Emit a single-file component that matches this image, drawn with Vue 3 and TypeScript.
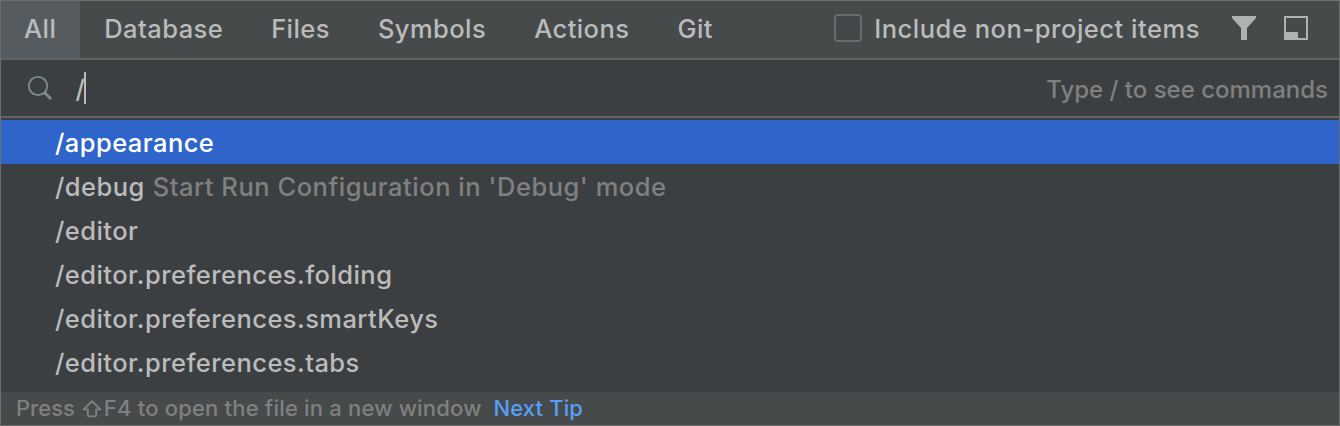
<script setup lang="ts">
import { ref } from 'vue'

interface Result {
  command: string
  description?: string
}

const tabs = ['All', 'Database', 'Files', 'Symbols', 'Actions', 'Git']
const activeTab = ref('All')
const selected = ref(0)
const includeNonProject = ref(false)

const results: Result[] = [
  { command: '/appearance' },
  { command: '/debug', description: "Start Run Configuration in 'Debug' mode" },
  { command: '/editor' },
  { command: '/editor.preferences.folding' },
  { command: '/editor.preferences.smartKeys' },
  { command: '/editor.preferences.tabs' },
]
</script>

<template>
  <div class="popup">
    <header class="toolbar">
      <nav class="tabs">
        <div
          v-for="tab in tabs"
          :key="tab"
          :class="['tab', 'tab-' + tab.toLowerCase(), { active: tab === activeTab }]"
          @click="activeTab = tab"
        >{{ tab }}</div>
      </nav>
      <div class="options">
        <div class="include" @click="includeNonProject = !includeNonProject">
          <span class="checkbox"></span>
          <span class="include-label">Include non-project items</span>
        </div>
        <svg class="icon filter" width="24" height="24" viewBox="0 0 24 24">
          <path d="M0 0H24V2L15 12V24H9V12L0 2Z" fill="#afb1b3" />
        </svg>
        <svg class="icon" width="24" height="24" viewBox="0 0 24 24">
          <path d="M0 0H24V24H0ZM2 2V16H14V22H22V2Z" fill="#afb1b3" fill-rule="evenodd" />
        </svg>
      </div>
    </header>

    <div class="search">
      <svg class="magnifier" width="26" height="26" viewBox="0 0 26 26">
        <circle cx="11" cy="11" r="9.2" fill="none" stroke="#7f8b91" stroke-width="1.8" />
        <path d="M17 17L24 24" fill="none" stroke="#7f8b91" stroke-width="2.8" />
      </svg>
      <span class="query">/</span>
      <span class="caret"></span>
      <span class="hint">Type / to see commands</span>
    </div>

    <main class="results">
      <div
        v-for="(item, i) in results"
        :key="item.command"
        :class="['row', { selected: i === selected }]"
        @click="selected = i"
      >
        <span class="command">{{ item.command }}</span>
        <span v-if="item.description" class="description">{{ item.description }}</span>
      </div>
    </main>

    <footer class="tip">
      <span>Press</span>
      <svg class="shift" width="20" height="18" viewBox="0 0 20 18">
        <path
          d="M10 1.3L1.6 9.4H5.8V14.8Q5.8 16.4 7.3 16.4H12.7Q14.2 16.4 14.2 14.8V9.4H18.4Z"
          fill="none"
          stroke="#808080"
          stroke-width="1.9"
          stroke-linejoin="round"
        />
      </svg>
      <span class="tip-text">F4 to open the file in a new window</span>
      <span class="next">Next Tip</span>
    </footer>
  </div>
</template>

<style>
body {
  margin: 0;
  background: #3c3f41;
}
</style>

<style scoped>
.popup {
  box-sizing: border-box;
  width: 1340px;
  height: 426px;
  display: flex;
  flex-direction: column;
  overflow: hidden;
  border: 1px solid #6a6e6f;
  background: #3c3f41;
  color: #bbbbbb;
  font-family: Inter, "Liberation Sans", sans-serif;
  font-size: 25.5px;
  font-weight: 450;
  line-height: 44px;
  white-space: nowrap;
}

.toolbar {
  box-sizing: border-box;
  flex: none;
  display: flex;
  justify-content: space-between;
  height: 59px;
  border-bottom: 2px solid #646464;
  background: #464a4b;
}

.tabs {
  display: flex;
}

.tab {
  padding: 0 24px;
  line-height: 56px;
  letter-spacing: 0.44px;
}

.tab-all {
  padding-left: 23px;
}

.active {
  background: #565b5f;
}

.options {
  display: flex;
  align-items: center;
  padding-right: 31px;
}

.include {
  display: flex;
  align-items: center;
  height: 56px;
  margin-top: -2px;
  line-height: 56px;
}

.checkbox {
  box-sizing: border-box;
  width: 28px;
  height: 28px;
  margin: 0 12px 2px 0;
  border: 2px solid #6b6b6b;
  border-radius: 4px;
  background: #43494a;
}

.include-label {
  letter-spacing: 0.53px;
}

.icon {
  flex: none;
  display: block;
  margin-bottom: 3px;
}

.filter {
  margin: 0 28px 3px 32px;
}

.search {
  box-sizing: border-box;
  flex: none;
  display: flex;
  align-items: center;
  height: 58px;
  padding: 0 11px 0 26px;
  border-bottom: 2px solid #646464;
}

.magnifier {
  flex: none;
  margin-right: 22.5px;
}

.query {
  width: 8.5px;
  padding-top: 2px;
  color: #bbbbbb;
}

.caret {
  width: 2px;
  height: 32px;
  background: #bbbbbb;
}

.hint {
  margin-left: auto;
  padding-top: 4px;
  color: #808080;
  font-size: 24px;
}

.results {
  flex: none;
  height: 272px;
  padding-top: 2px;
  box-sizing: content-box;
}

.row {
  display: flex;
  height: 44px;
  padding-left: 54px;
  line-height: 46px;
  letter-spacing: 0.44px;
}

.selected {
  background: #2f65ca;
  color: #ffffff;
}

.description {
  margin-left: 8px;
  color: #808080;
  letter-spacing: 0.52px;
}

.tip {
  flex: 1;
  display: flex;
  align-items: center;
  padding-left: 15px;
  background: #464a4b;
  color: #808080;
  font-size: 22px;
  line-height: 33px;
}

.shift {
  margin: 0 1.5px 0 7.5px;
}

.tip-text {
  letter-spacing: 0.19px;
}

.next {
  margin-left: 12px;
  color: #589df6;
  letter-spacing: 0.1px;
}
</style>
